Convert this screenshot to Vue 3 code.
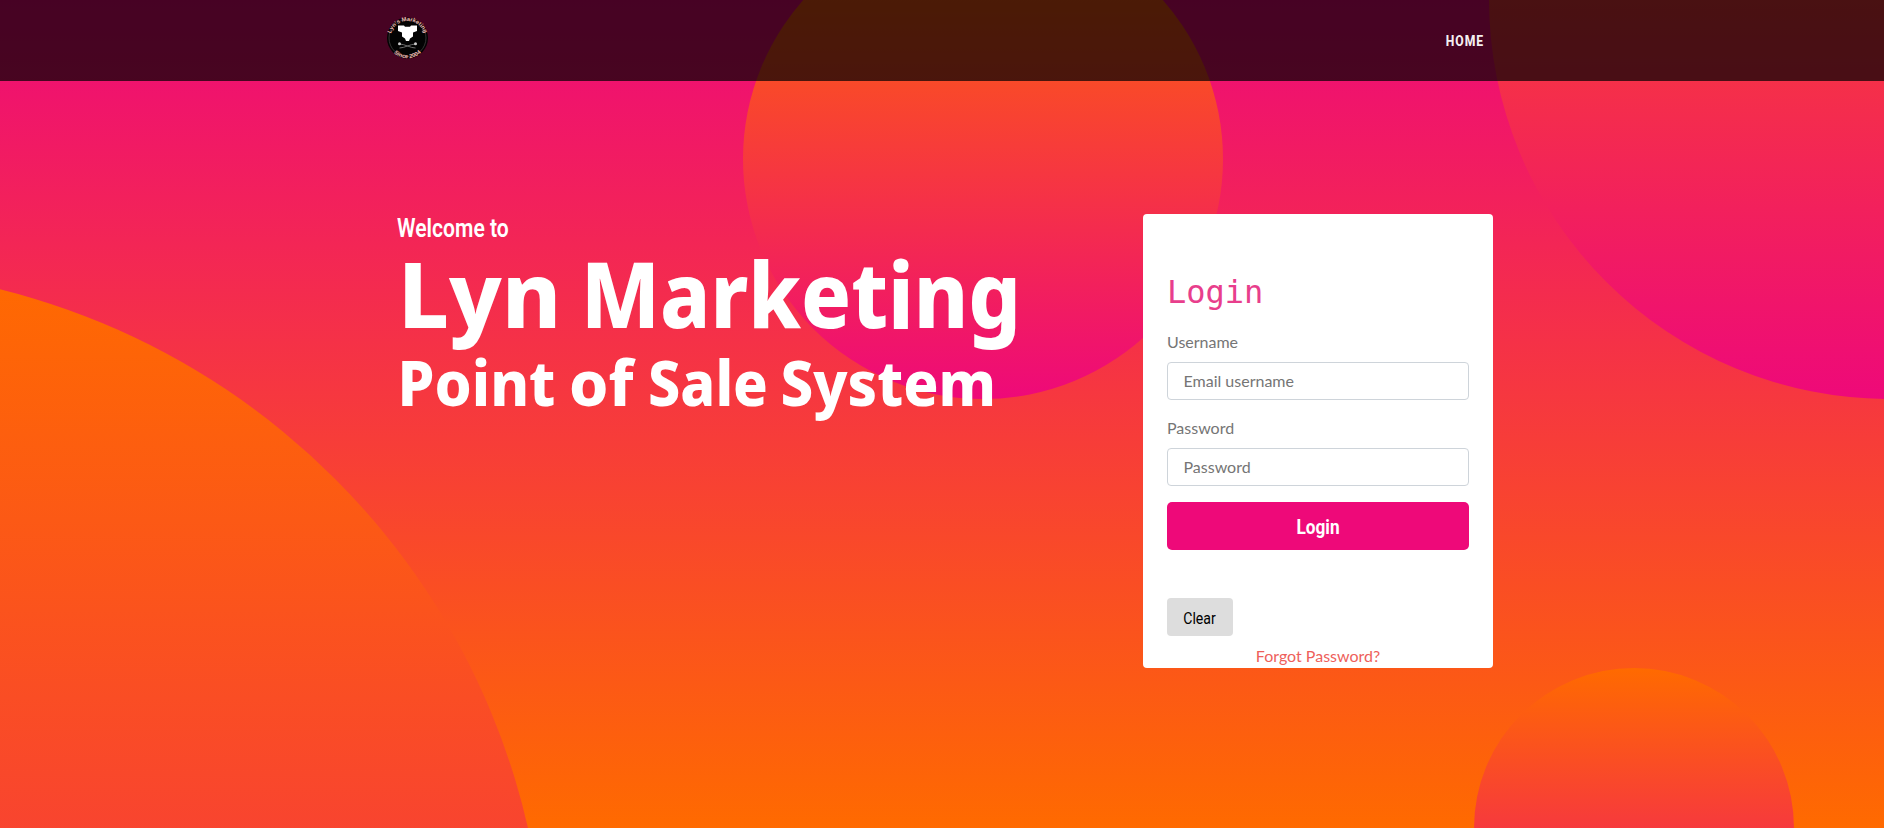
<script setup>
const fields = [
  { id: 'username', label: 'Username', type: 'text', placeholder: 'Email username' },
  { id: 'password', label: 'Password', type: 'password', placeholder: 'Password' },
]
</script>

<template>
  <div class="page">
    <div class="circle c1"></div>
    <div class="circle c2"></div>
    <div class="circle c3"></div>
    <div class="circle c4"></div>
    <nav class="navbar">
      <div class="nav-inner">
        <svg class="logo" viewBox="0 0 44 44">
          <defs>
            <path id="arc-top" d="M5.500 22 A17 17 0 0 1 39.500 22" />
            <path id="arc-bottom" d="M2.300 22 A20.200 20.200 0 0 0 42.700 22" />
          </defs>
          <circle cx="22.500" cy="22" r="20.500" fill="#030303" />
          <circle cx="22.500" cy="22" r="18.500" fill="none" stroke="#4b4747" stroke-width=".7" />
          <text class="seal"><textPath href="#arc-top" startOffset="50%">Lyn's Marketing</textPath></text>
          <text class="seal"><textPath href="#arc-bottom" startOffset="50%">Since 2004</textPath></text>
          <path d="M13 9.500h6l1 1.200h5l1-1.200h6v5.500l-4 1.500v4l-3 2-1 2.500h-3l-1-2.500-3-2v-4l-4-1.500z" fill="#fff" />
          <path d="M14.500 28c5 0 11 4 16 4M14.500 32c5 0 11-4 16-4" fill="none" stroke="#777" stroke-width=".9" />
          <g fill="#ccc"><circle cx="14.500" cy="27.800" r="1.500" /><circle cx="30.500" cy="27.800" r="1.500" /></g>
        </svg>
        <a class="home">HOME</a>
      </div>
    </nav>
    <main class="content">
      <section class="hero">
        <p class="welcome"><span>Welcome to</span></p>
        <svg class="title" width="640" height="190" viewBox="397 244 640 190">
          <g class="brand">
            <text x="398" y="328" textLength="163" lengthAdjust="spacingAndGlyphs">Lyn</text>
            <text x="581" y="328" textLength="440" lengthAdjust="spacingAndGlyphs">Marketing</text>
          </g>
          <g class="tagline">
            <text x="397.500" y="405.700" textLength="158" lengthAdjust="spacingAndGlyphs">Point</text>
            <text x="569" y="405.700" textLength="64.500" lengthAdjust="spacingAndGlyphs">of</text>
            <text x="648" y="405.700" textLength="120" lengthAdjust="spacingAndGlyphs">Sale</text>
            <text x="780.500" y="405.700" textLength="215.500" lengthAdjust="spacingAndGlyphs">System</text>
          </g>
        </svg>
      </section>
      <form class="card" @submit.prevent>
        <h3>Login</h3>
        <div v-for="f in fields" :key="f.id" class="field">
          <label :for="f.id">{{ f.label }}</label>
          <input :id="f.id" :type="f.type" :placeholder="f.placeholder" />
        </div>
        <button class="login" type="submit"><span>Login</span></button>
        <button class="clear" type="reset"><span>Clear</span></button>
        <a class="forgot">Forgot Password?</a>
      </form>
    </main>
  </div>
</template>

<style>
body { margin: 0; }
</style>

<style scoped>
* { box-sizing: border-box; }
.page {
  position: relative;
  height: 828px;
  overflow: hidden;
  background: linear-gradient(0deg, #ff6a00 0%, #ee0979 100%);
  font-family: Lato, sans-serif;
  font-size: 16px;
  line-height: 24px;
}
.circle {
  position: absolute;
  border-radius: 50%;
  background: linear-gradient(0deg, #ee0979 0%, #ff6a00 100%);
}
.c1 { width: 1440px; height: 1440px; bottom: -880px; left: -894px; }
.c2 { width: 800px; height: 800px; top: -401px; right: -405px; }
.c3 { width: 320px; height: 320px; bottom: -160px; right: 90px; }
.c4 { width: 480px; height: 480px; top: -81px; right: 661px; }
.navbar {
  position: relative;
  height: 81px;
  background: rgba(0, 0, 0, .7);
}
.nav-inner {
  width: 1110px;
  height: 81px;
  margin-left: 385px;
  display: flex;
  justify-content: space-between;
  align-items: center;
}
.logo { width: 44px; height: 44px; margin-bottom: 5px; }
.seal {
  font: 700 5.8px "Liberation Sans", sans-serif;
  fill: #f0b9b3;
  text-anchor: middle;
}
.home {
  color: rgba(255, 255, 255, .95);
  font: 800 14px/20px "Roboto", sans-serif;
  letter-spacing: 1.1px;
  margin-right: 11px;
  transform: scaleX(.87);
  transform-origin: right;
}
.content {
  position: relative;
  display: flex;
  justify-content: space-between;
  width: 1096px;
  margin: 133px 0 0 397px;
}
.hero { color: #fff; white-space: nowrap; }
.hero p { margin: 0; }
.hero span, button span { display: inline-block; }
.welcome { font: 600 25px/30px Roboto, sans-serif; }
.welcome span { transform: scaleX(.845); transform-origin: left; }
.title { display: block; overflow: visible; fill: #fff; }
.brand { font: 800 91px "Noto Sans", sans-serif; }
.tagline { font: 800 61.5px "Noto Sans", sans-serif; }
.card {
  width: 350px;
  height: 454px;
  padding: 56px 24px 0;
  background: #fff;
  border-radius: 4px;
  display: flex;
  flex-direction: column;
}
.card h3 {
  margin: 0 0 4px;
  color: #e83e8c;
  font: 400 32px/44px "DejaVu Sans Mono", monospace;
}
.field { display: flex; flex-direction: column; margin-bottom: 16px; }
label { color: #757575; margin: 12px 0 8px; line-height: 24px; }
.field + .field label { margin-top: 0; }
input {
  height: 38px;
  padding: 5px 15.5px 7px;
  border: 1px solid #ced4da;
  border-radius: 4px;
  background: #fff;
  font: 16px/24px Lato, sans-serif;
}
input::placeholder { color: #757575; opacity: 1; }
button { border: 0; padding: 2px 0 0; border-radius: 5px; }
.login {
  height: 48px;
  color: #fff;
  background: #ee0979;
  font: 700 20px/30px Roboto, sans-serif;
}
.login span { transform: scaleX(.86); }
.clear {
  width: 66px;
  height: 38px;
  margin-top: 48px;
  padding: 3px 1px 0 0;
  background: #ddd;
  color: #000;
  border-radius: 4px;
  font: 400 16px/24px Roboto, sans-serif;
}
.clear span { transform: scaleX(.88); }
.forgot { margin-top: 8px; text-align: center; color: #ee5f5b; }
</style>
